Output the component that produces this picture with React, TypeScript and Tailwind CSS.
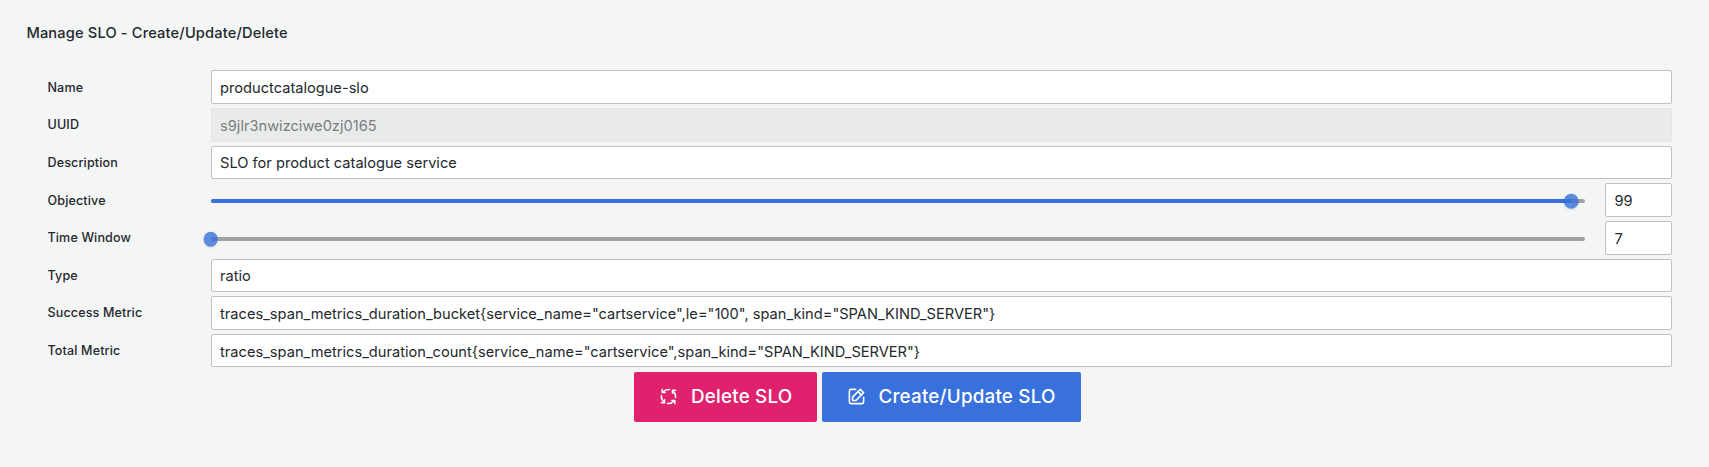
import React from "react";

const inputBase =
  "block h-[33.5px] min-w-0 rounded-[2px] border border-[#bfc1c1] bg-white px-[8.4px] pt-[1.6px] text-[14.64px] leading-[30px] text-[#24292e] outline-none";

function Row({ label, children }: { label: string; children: React.ReactNode }) {
  return (
    <div className="mb-[4.18px] flex h-[33.47px] items-center">
      <label className="w-[163.2px] shrink-0 pt-[0.8px] text-[12.55px] leading-[16px] font-medium tracking-[0.01071em]">
        {label}
      </label>
      {children}
    </div>
  );
}

function TextField({ label, value, disabled = false }: { label: string; value: string; disabled?: boolean }) {
  return (
    <Row label={label}>
      <input
        className={
          disabled
            ? "block h-[33.5px] min-w-0 flex-1 rounded-[2px] border border-[#e4e6e5] bg-[#e9ebea] px-[8.4px] pt-[1.6px] text-[14.64px] leading-[30px] text-[#7b7e81]"
            : inputBase + " flex-1"
        }
        defaultValue={value}
        disabled={disabled}
      />
    </Row>
  );
}

function SliderField({ label, value, percent }: { label: string; value: string; percent: number }) {
  return (
    <Row label={label}>
      <div className="relative mt-[2.4px] h-[4px] flex-1 rounded-full bg-[#9fa1a3]">
        <div className="h-full rounded-full bg-[#3871dc]" style={{ width: `${percent}%` }} />
        <div
          className="absolute top-1/2 size-[14.6px] -translate-x-1/2 -translate-y-1/2 rounded-full bg-[#3871dc] opacity-80 shadow-sm"
          style={{ left: `${percent}%` }}
        />
      </div>
      <input className={inputBase + " ml-[20px] w-[66.9px]"} defaultValue={value} />
    </Row>
  );
}

function ProcessIcon() {
  return (
    <svg viewBox="0 0 24 24" className="size-[19px]" fill="none" stroke="currentColor" strokeWidth="1.9" strokeLinecap="round" strokeLinejoin="round">
      {[0, 90, 180, 270].map((angle) => (
        <g key={angle} transform={`rotate(${angle} 12 12)`}>
          <path d="M13.2 3.1A9 9 0 0 0 5.2 6.3" />
          <path d="M4 3V7H7.8" />
        </g>
      ))}
    </svg>
  );
}

function EditIcon() {
  return (
    <svg viewBox="0 0 24 24" className="size-[19px]" fill="currentColor">
      <path d="M21,12a1,1,0,0,0-1,1v6a1,1,0,0,1-1,1H5a1,1,0,0,1-1-1V5A1,1,0,0,1,5,4h6a1,1,0,0,0,0-2H5A3,3,0,0,0,2,5V19a3,3,0,0,0,3,3H19a3,3,0,0,0,3-3V13A1,1,0,0,0,21,12ZM6,12.76V17a1,1,0,0,0,1,1h4.24a1,1,0,0,0,.71-.29l6.92-6.93h0L21.71,8a1,1,0,0,0,0-1.42L17.47,2.29a1,1,0,0,0-1.42,0L13.23,5.12h0L6.29,12.05A1,1,0,0,0,6,12.76ZM16.76,4.41l2.83,2.83L18.17,8.66,15.34,5.83ZM8,13.17l5.93-5.93,2.83,2.83L10.83,16H8Z" />
    </svg>
  );
}

export default function App() {
  return (
    <main className="h-[467px] overflow-hidden bg-[#f4f5f5] pt-[22px] font-['Inter',sans-serif] text-[#24292e]">
      <h1 className="pl-[26.4px] text-[14.64px] leading-[22px] font-medium tracking-[0.01071em]">
        Manage SLO - Create/Update/Delete
      </h1>
      <form className="mt-[26.5px] pr-[37px] pl-[47.5px]">
        <TextField label="Name" value="productcatalogue-slo" />
        <TextField label="UUID" value="s9jlr3nwizciwe0zj0165" disabled />
        <TextField label="Description" value="SLO for product catalogue service" />
        <SliderField label="Objective" value="99" percent={99} />
        <SliderField label="Time Window" value="7" percent={0} />
        <TextField label="Type" value="ratio" />
        <TextField
          label="Success Metric"
          value={'traces_span_metrics_duration_bucket{service_name="cartservice",le="100", span_kind="SPAN_KIND_SERVER"}'}
        />
        <TextField
          label="Total Metric"
          value={'traces_span_metrics_duration_count{service_name="cartservice",span_kind="SPAN_KIND_SERVER"}'}
        />
      </form>
      <div className="mt-[0.3px] flex justify-center gap-[5px] pl-[6px]">
        <button
          type="button"
          className="flex h-[50px] w-[183px] items-center rounded-[2px] bg-[#e0226e] pl-[25px] text-[18.82px] font-medium tracking-[0.01071em] whitespace-nowrap text-white"
        >
          <ProcessIcon />
          <span className="ml-[13px]">Delete SLO</span>
        </button>
        <button
          type="button"
          className="flex h-[50px] w-[259px] items-center rounded-[2px] bg-[#3871dc] pl-[25px] text-[18.82px] font-medium tracking-[0.01071em] whitespace-nowrap text-white"
        >
          <EditIcon />
          <span className="ml-[12.5px]">Create/Update SLO</span>
        </button>
      </div>
    </main>
  );
}
